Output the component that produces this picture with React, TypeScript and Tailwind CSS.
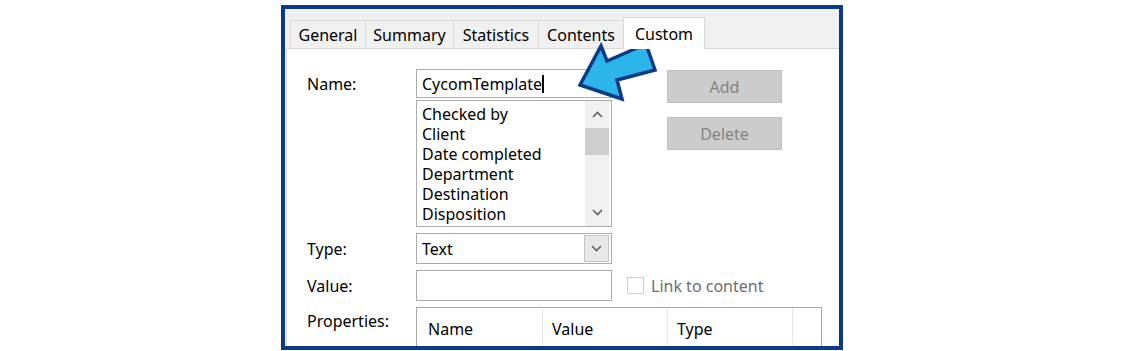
import React from "react";

const font = { fontFamily: '"Noto Sans", "Open Sans", Arial, sans-serif' };

function ChevronUp({ className = "" }: { className?: string }) {
  return (
    <svg width="11" height="7" viewBox="0 0 11 7" className={className}>
      <path d="M1 6 L5.5 1.5 L10 6" fill="none" stroke="#606060" strokeWidth="1.6" />
    </svg>
  );
}
function ChevronDown({ className = "" }: { className?: string }) {
  return (
    <svg width="11" height="7" viewBox="0 0 11 7" className={className}>
      <path d="M1 1 L5.5 5.5 L10 1" fill="none" stroke="#606060" strokeWidth="1.6" />
    </svg>
  );
}

const tabs = [
  { label: "General", w: "w-[76px]" },
  { label: "Summary", w: "w-[89px]" },
  { label: "Statistics", w: "w-[86px]" },
  { label: "Contents", w: "w-[86px]" },
];

const items = ["Checked by", "Client", "Date completed", "Department", "Destination", "Disposition"];

export default function App() {
  return (
    <div className="relative w-[1123px] h-[351px] bg-white pt-[5px] pl-[281px] text-[16px] text-black" style={font}>
      <div className="w-[562px] h-[345px] border-4 border-[#0b3a87] bg-[#f0f0f0] flex flex-col overflow-hidden">
        {/* tab strip */}
        <div className="h-[39px] flex items-end pl-[5px] shrink-0 relative z-10">
          {tabs.map((t) => (
            <div
              key={t.label}
              className={`${t.w} h-[28px] border border-b-0 border-[#d9d9d9] -ml-px first:ml-0 flex items-center justify-center leading-none pt-px`}
            >
              {t.label}
            </div>
          ))}
          <div className="w-[82px] h-[32px] -mb-px -ml-px bg-white border border-b-0 border-[#d9d9d9] flex items-start justify-center pt-[6px] leading-[20px]">
            Custom
          </div>
        </div>
        {/* panel */}
        <div className="flex-1 ml-[1px] bg-white border-t border-l border-[#d9d9d9] pt-[20px] pl-[20px]">
          {/* name row */}
          <div className="flex">
            <div className="w-[109px] h-[29px] flex items-center">Name:</div>
            <div className="w-[196px] flex flex-col">
              <div className="h-[29px] border border-[#acacac] flex items-center pl-[5px] leading-none">
                <span>CycomTemplate</span>
                <span className="inline-block w-[2px] h-[18px] bg-black"></span>
              </div>
              <div className="mt-[2px] h-[127px] border border-[#acacac] flex">
                <div className="flex-1 pl-[5px] pt-[3px] leading-[20px]">
                  {items.map((i) => (
                    <div key={i}>{i}</div>
                  ))}
                </div>
                <div className="w-[24px] bg-[#f0f0f0] mr-[2px] flex flex-col items-center">
                  <div className="h-[27px] flex items-center justify-center">
                    <ChevronUp />
                  </div>
                  <div className="w-full h-[27px] bg-[#cdcdcd]"></div>
                  <div className="flex-1"></div>
                  <div className="h-[27px] flex items-center justify-center">
                    <ChevronDown />
                  </div>
                </div>
              </div>
            </div>
            <div className="ml-[55px] pt-px flex flex-col gap-[14px]">
              <div className="w-[115px] h-[33px] bg-[#cccccc] border border-[#bfbfbf] text-[#838383] flex items-center justify-center">
                Add
              </div>
              <div className="w-[115px] h-[33px] bg-[#cccccc] border border-[#bfbfbf] text-[#838383] flex items-center justify-center">
                Delete
              </div>
            </div>
          </div>
          {/* type row */}
          <div className="flex mt-[6px]">
            <div className="w-[109px] h-[31px] flex items-center">Type:</div>
            <div className="w-[196px] h-[31px] border border-[#acacac] flex items-center pl-[5px]">
              <span className="flex-1 leading-none">Text</span>
              <div className="w-[25px] h-[27px] mr-[2px] bg-[#e8e8e8] border border-[#c4c4c4] flex items-center justify-center">
                <ChevronDown />
              </div>
            </div>
          </div>
          {/* value row */}
          <div className="flex mt-[6px] items-center">
            <div className="w-[109px] h-[31px] flex items-center">Value:</div>
            <div className="w-[196px] h-[31px] border border-[#acacac]"></div>
            <div className="ml-[15px] w-[17px] h-[17px] border border-[#cfcfcf] bg-white"></div>
            <span className="ml-[7px] text-[#6d6d6d] leading-none">Link to content</span>
          </div>
          {/* properties row */}
          <div className="flex mt-[6px]">
            <div className="w-[109px] pt-[4px] leading-[20px]">Properties:</div>
            <div className="w-[406px] h-[60px] border border-[#a8a8a8] flex">
              <div className="w-[126px] border-r border-[#e5e5e5] pl-[11px] pt-[11px] leading-[20px]">Name</div>
              <div className="w-[125px] border-r border-[#e5e5e5] pl-[9px] pt-[11px] leading-[20px]">Value</div>
              <div className="w-[125px] border-r border-[#e5e5e5] pl-[9px] pt-[11px] leading-[20px]">Type</div>
              <div className="flex-1"></div>
            </div>
          </div>
        </div>
      </div>
      {/* callout arrow */}
      <svg className="absolute left-0 top-0 pointer-events-none" width="1123" height="351" viewBox="0 0 1123 351">
        <polygon
          points="580,85 601,46 607,61 646,44 655,70 617,80 622,99"
          fill="#2bb5e9"
          stroke="#0b3a87"
          strokeWidth="3.5"
          strokeLinejoin="miter"
        />
      </svg>
    </div>
  );
}
